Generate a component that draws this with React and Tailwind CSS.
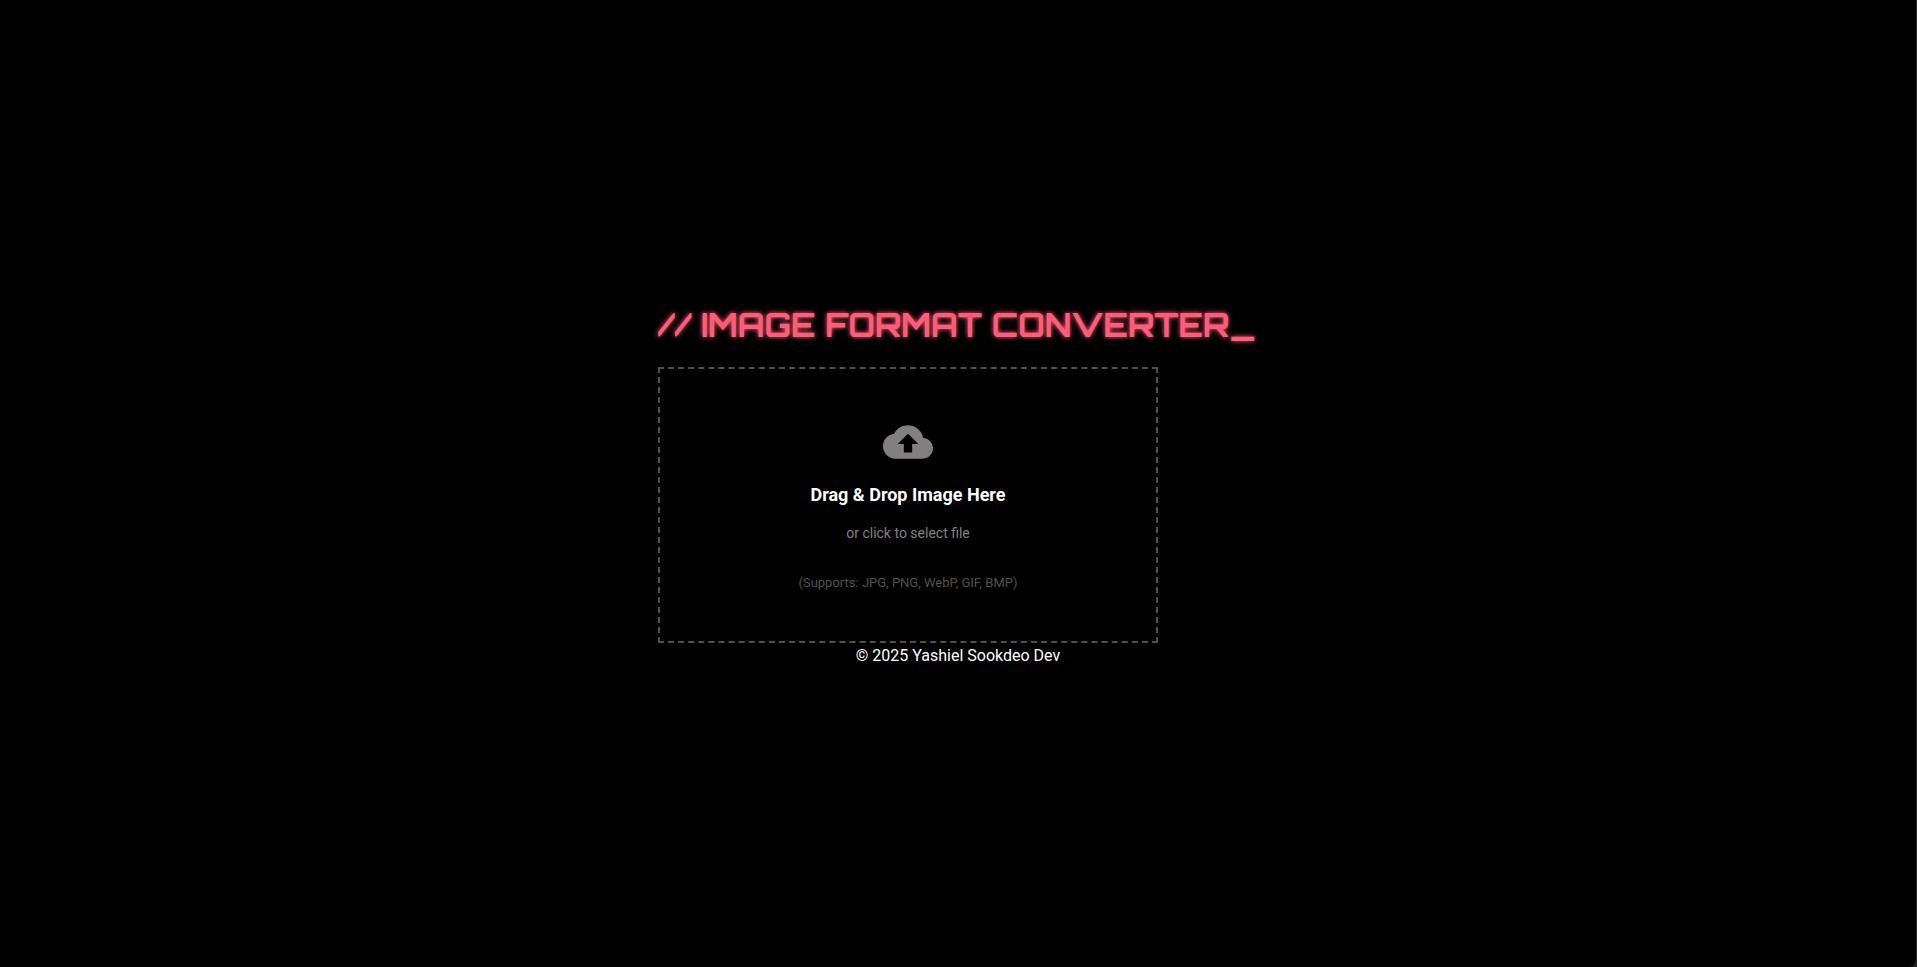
import { MdCloudUpload } from "react-icons/md";

function DropZone() {
  return (
    <label
      htmlFor="image-file"
      className="flex w-full max-w-[500px] cursor-pointer flex-col items-center border-2 border-dashed border-[#505050] p-12 text-center"
    >
      <input id="image-file" type="file" accept="image/*" className="sr-only" />
      <MdCloudUpload aria-hidden="true" className="size-[50px] text-[#827f80]" />
      <span className="mt-4 text-[18px] leading-6 font-bold text-white">Drag &amp; Drop Image Here</span>
      <span className="mt-4 text-[14px] leading-5 text-[#808080]">or click to select file</span>
      <span className="mt-[30px] text-[13px] leading-5 text-[#505050]">(Supports: JPG, PNG, WebP, GIF, BMP)</span>
    </label>
  );
}

export default function App() {
  return (
    <div className="min-h-screen bg-[#222222]">
      <div className="flex min-h-screen flex-col items-center justify-center rounded-br-lg border-r border-[#2b2b2b] bg-black font-['Roboto',sans-serif] text-white">
        <main className="w-full max-w-[600px]">
          <h1 className="mb-4 font-['Orbitron','DejaVu_Sans',sans-serif] text-[32px] leading-[52px] font-bold whitespace-nowrap text-[#ff5c77] [text-shadow:0_0_5px_#ff5c77]">
            // IMAGE FORMAT CONVERTER_
          </h1>
          <DropZone />
        </main>
        <footer className="text-[16px] leading-[26px]">© 2025 Yashiel Sookdeo Dev</footer>
      </div>
    </div>
  );
}
